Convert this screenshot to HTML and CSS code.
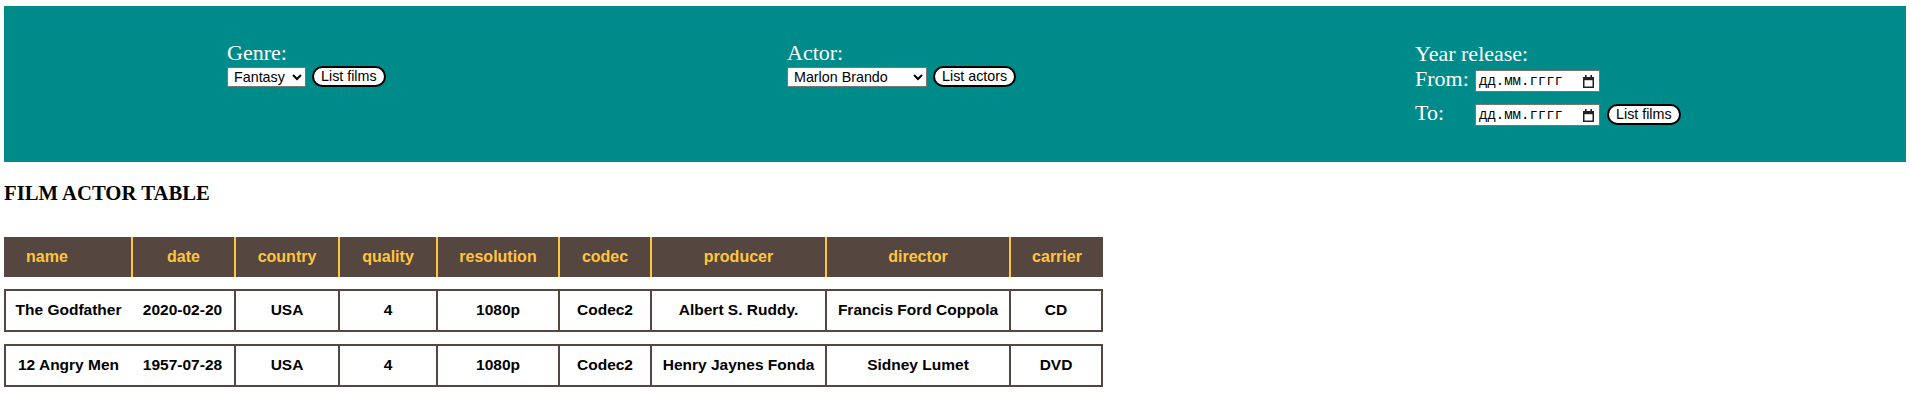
FILE: index.html
```html
<!DOCTYPE html>
<html lang="ru">
<head>
<meta charset="utf-8">
<title>Film actor table</title>
<link rel="stylesheet" href="styles.css">
</head>
<body>
<header class="filters">
  <div class="group group-genre">
    <div class="group-label">Genre:</div>
    <div class="controls">
      <select class="select select-genre"><option>Fantasy</option><option>Drama</option></select>
      <button class="btn" type="button">List films</button>
    </div>
  </div>
  <div class="group group-actor">
    <div class="group-label">Actor:</div>
    <div class="controls">
      <select class="select select-actor"><option>Marlon Brando</option><option>Henry Fonda</option></select>
      <button class="btn" type="button">List actors</button>
    </div>
  </div>
  <div class="group group-year">
    <div class="group-label">Year release:</div>
    <div class="year-row">
      <span class="row-label">From:</span>
      <span class="date-field"><span class="date-text">дд.мм.гггг</span><svg class="cal" width="11" height="13" viewBox="0 0 11 13"><rect x="0.75" y="2.75" width="9.5" height="9.5" fill="none" stroke="#222" stroke-width="1.5"/><rect x="0" y="2" width="11" height="3.2" fill="#222"/><rect x="2" y="0" width="1.6" height="3" fill="#222"/><rect x="7.4" y="0" width="1.6" height="3" fill="#222"/></svg></span>
    </div>
    <div class="year-row year-row-to">
      <span class="row-label">To:</span>
      <span class="date-field"><span class="date-text">дд.мм.гггг</span><svg class="cal" width="11" height="13" viewBox="0 0 11 13"><rect x="0.75" y="2.75" width="9.5" height="9.5" fill="none" stroke="#222" stroke-width="1.5"/><rect x="0" y="2" width="11" height="3.2" fill="#222"/><rect x="2" y="0" width="1.6" height="3" fill="#222"/><rect x="7.4" y="0" width="1.6" height="3" fill="#222"/></svg></span>
      <button class="btn" type="button">List films</button>
    </div>
  </div>
</header>

<h2 class="title">FILM ACTOR TABLE</h2>

<table class="films">
  <colgroup>
    <col class="c-name"><col class="c-date"><col class="c-country"><col class="c-quality"><col class="c-resolution"><col class="c-codec"><col class="c-producer"><col class="c-director"><col class="c-carrier">
  </colgroup>
  <thead>
    <tr><th>name</th><th>date</th><th>country</th><th>quality</th><th>resolution</th><th>codec</th><th>producer</th><th>director</th><th>carrier</th></tr>
  </thead>
  <tbody>
    <tr><td>The Godfather</td><td>2020-02-20</td><td>USA</td><td>4</td><td>1080p</td><td>Codec2</td><td>Albert S. Ruddy.</td><td>Francis Ford Coppola</td><td>CD</td></tr>
    <tr><td>12 Angry Men</td><td>1957-07-28</td><td>USA</td><td>4</td><td>1080p</td><td>Codec2</td><td>Henry Jaynes Fonda</td><td>Sidney Lumet</td><td>DVD</td></tr>
  </tbody>
</table>
</body>
</html>
```

FILE: styles.css
```css
html, body {
  background: #ffffff;
}
body {
  margin: 6px 4px;
  font-family: "Liberation Serif", "Times New Roman", serif;
  color: #000;
}

/* ---------- filter bar ---------- */
.filters {
  display: flex;
  align-items: flex-start;
  background: #008b8b;
  padding: 35px 0 36px 223px;
}
.group-genre { width: 560px; }
.group-actor { width: 628px; }
.group-year { margin-top: 1px; }

.group-label {
  color: #fff;
  font-size: 22px;
  line-height: 24px;
}

.controls {
  display: flex;
  align-items: center;
  gap: 6px;
  margin-top: 1px;
}

.select {
  box-sizing: border-box;
  height: 20px;
  font-family: "Liberation Sans", Arial, sans-serif;
  font-size: 14.3px;
  color: #000;
  background: #fff;
  border: 1px solid #767676;
  border-radius: 0;
  padding: 0 0 0 2px;
  margin: 0;
}
.select-genre { width: 79px; }
.select-actor { width: 140px; }

.btn {
  box-sizing: border-box;
  height: 21px;
  margin: 0;
  padding: 0 7px;
  font-family: "Liberation Sans", Arial, sans-serif;
  font-size: 14.3px;
  line-height: 17px;
  color: #000;
  background: #fff;
  border: 2px solid #000;
  border-radius: 11px;
}

.year-row {
  display: flex;
  align-items: flex-start;
  margin-top: 4px;
}
.year-row-to { margin-top: 12px; }
.year-row .btn { margin-left: 7px; margin-top: 0; }

.row-label {
  width: 60px;
  color: #fff;
  font-size: 22px;
  line-height: 17px;
}

.date-field {
  box-sizing: border-box;
  width: 125px;
  height: 22px;
  display: flex;
  align-items: center;
  justify-content: space-between;
  padding: 0 5px 0 3px;
  background: #fff;
  border: 1px solid #767676;
}
.date-text {
  font-family: "Liberation Mono", "DejaVu Sans Mono", monospace;
  font-size: 14px;
  line-height: 16px;
  color: #000;
}
.cal { display: block; }

/* ---------- title ---------- */
.title {
  margin: 20px 0;
  font-size: 20.7px;
  line-height: 23px;
  font-weight: bold;
}

/* ---------- table ---------- */
.films {
  table-layout: fixed;
  width: 1099px;
  border-collapse: separate;
  border-spacing: 0 12px;
  margin: 0;
  font-family: "Liberation Sans", Arial, sans-serif;
}
.c-name { width: 127px; }
.c-date { width: 103px; }
.c-country { width: 104px; }
.c-quality { width: 98px; }
.c-resolution { width: 122px; }
.c-codec { width: 92px; }
.c-producer { width: 175px; }
.c-director { width: 184px; }
.c-carrier { width: 94px; }

.films th {
  background: #564640;
  color: #ffc53d;
  font-size: 16px;
  font-weight: bold;
  line-height: 18px;
  padding: 11px 0;
  text-align: center;
  white-space: nowrap;
}
.films th:first-child {
  text-align: left;
  padding-left: 22px;
}
.films th + th {
  border-left: 2px solid #ffc53d;
}

.films td {
  background: #fff;
  color: #000;
  font-size: 15.5px;
  font-weight: bold;
  line-height: 18px;
  padding: 10px 0 11px;
  text-align: center;
  white-space: nowrap;
  border-top: 2px solid #564640;
  border-bottom: 2px solid #564640;
}
.films td:first-child { border-left: 2px solid #564640; }
.films td:nth-child(n+3) { border-left: 2px solid #564640; }
.films td:last-child { border-right: 2px solid #564640; }
```
